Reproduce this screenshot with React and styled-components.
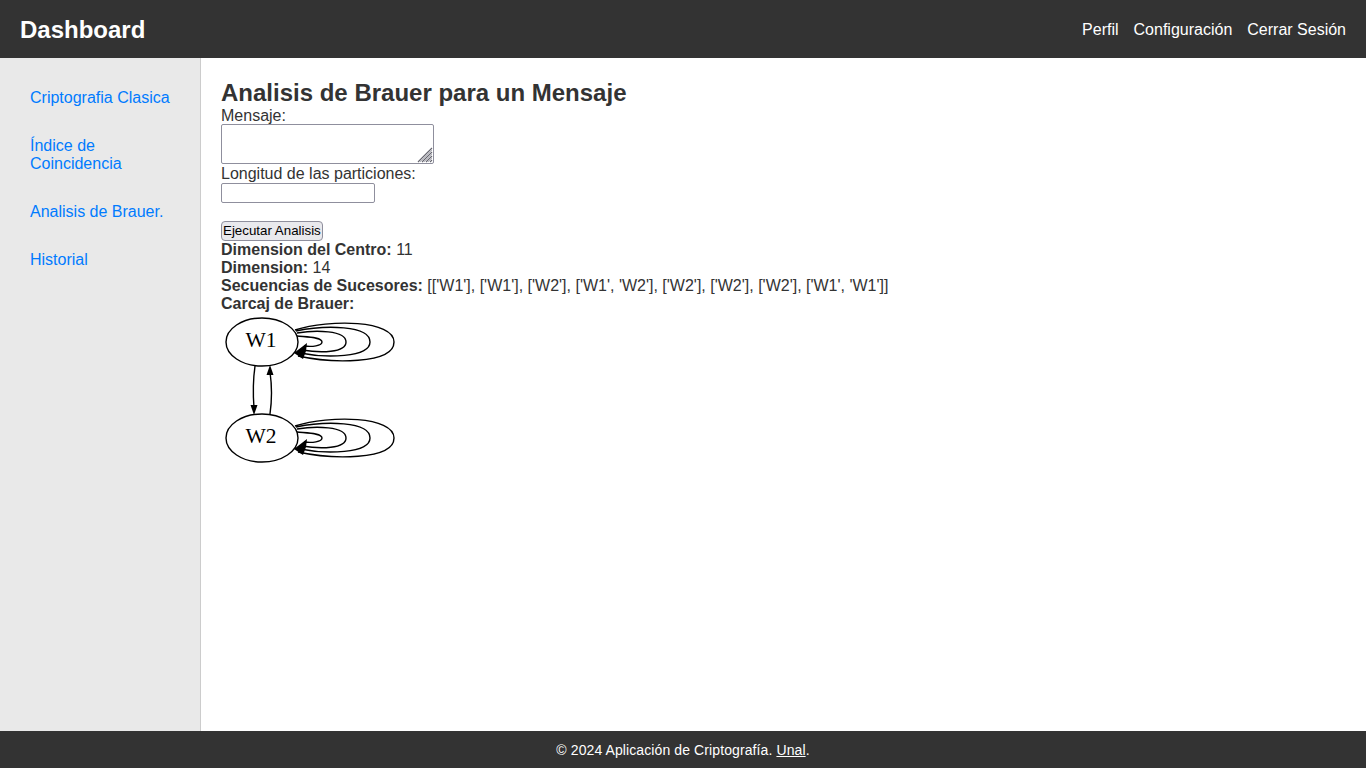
import React from "react";
import styled, { createGlobalStyle } from "styled-components";

const GlobalStyle = createGlobalStyle`
  html, body {
    margin: 0;
    padding: 0;
    height: 100%;
    font-family: "Liberation Sans", Arial, sans-serif;
    font-size: 16px;
    color: #333;
    background: #fff;
  }
`;

const Page = styled.div`
  display: flex;
  flex-direction: column;
  height: 100vh;
`;

const Header = styled.header`
  display: flex;
  align-items: center;
  justify-content: space-between;
  box-sizing: border-box;
  height: 58px;
  padding: 2px 20px 0;
  background: #333;
  color: #fff;
`;

const Brand = styled.h1`
  margin: 0;
  font-size: 24px;
  font-weight: bold;
`;

const TopNav = styled.nav`
  display: flex;
  gap: 15px;
`;

const TopLink = styled.a`
  color: #fff;
  text-decoration: none;
`;

const Body = styled.div`
  display: flex;
  flex: 1;
`;

const Sidebar = styled.aside`
  width: 160px;
  padding: 21px 20px 20px;
  background: #e9e9e9;
  border-right: 1px solid #ccc;
`;

const SideList = styled.ul`
  list-style: none;
  margin: 0;
  padding: 0;
  display: flex;
  flex-direction: column;
  gap: 10px;
`;

const SideLink = styled.a`
  display: block;
  padding: 10px;
  color: #007bff;
  text-decoration: none;
`;

const Main = styled.main`
  flex: 1;
  padding: 21px 20px 20px;
`;

const Title = styled.h2`
  margin: 0;
  font-size: 24px;
  font-weight: bold;
`;

const FieldLabel = styled.label`
  display: block;
  height: ${(p) => (p.$tall ? "19px" : "17px")};
  line-height: ${(p) => (p.$tall ? "20px" : "18px")};
`;

const MessageWrap = styled.div`
  position: relative;
  width: 213px;
  height: 40px;
`;

const MessageBox = styled.textarea`
  display: block;
  box-sizing: border-box;
  width: 213px;
  height: 40px;
  margin: 0;
  border: 1px solid #8f8f9d;
  border-radius: 2px;
  background: #fff;
  resize: none;
`;

const ResizeGrip = styled.svg`
  position: absolute;
  right: 1px;
  bottom: 1px;
  pointer-events: none;
`;

const LengthInput = styled.input`
  display: block;
  box-sizing: border-box;
  width: 154px;
  height: 20px;
  margin: 0 0 18px;
  border: 1px solid #8f8f9d;
  border-radius: 2px;
  background: #fff;
`;

const RunButton = styled.button`
  display: block;
  box-sizing: border-box;
  height: 20px;
  padding: 0 1px 2px;
  border: 1px solid #8f8f9d;
  border-radius: 4px;
  background: #e9e9ed;
  color: #000;
  font-family: "Liberation Sans", Arial, sans-serif;
  font-size: 13.33px;
`;

const ResultLine = styled.div`
  line-height: 18px;
`;

const Graph = styled.svg`
  display: block;
`;

const Footer = styled.footer`
  height: 37px;
  display: flex;
  align-items: center;
  justify-content: center;
  background: #333;
  color: #fff;
  font-size: 14px;
  letter-spacing: 0.1px;
`;

const FooterLink = styled.a`
  color: #fff;
  text-decoration: underline;
`;

const loops = (cy) => [
  `M297 ${cy - 6} C306 ${cy - 5} 322 ${cy - 5} 322 ${cy} C322 ${cy + 4} 312 ${cy + 5} 304 ${cy + 4}`,
  `M297 ${cy - 9} C315 ${cy - 12} 346 ${cy - 12} 346 ${cy} C346 ${cy + 11} 320 ${cy + 11} 302 ${cy + 8}`,
  `M296 ${cy - 11} C325 ${cy - 17} 370 ${cy - 17} 370 ${cy} C370 ${cy + 16} 325 ${cy + 16} 300 ${cy + 11}`,
  `M295 ${cy - 12} C330 ${cy - 23} 394 ${cy - 22} 394 ${cy} C394 ${cy + 23} 330 ${cy + 21} 298 ${cy + 14}`,
];

function Node({ cy, label }) {
  return (
    <g>
      <ellipse cx="262" cy={cy} rx="36" ry="24" fill="#fff" stroke="#000" strokeWidth="1.4" />
      {loops(cy).map((d) => (
        <path key={d} d={d} fill="none" stroke="#000" strokeWidth="1.4" />
      ))}
      <polygon points={`307,${cy + 1} 294,${cy + 11} 303,${cy + 17} 306,${cy + 9}`} fill="#000" />
      <text x="261" y={cy + 5} textAnchor="middle" fontFamily="'Liberation Serif', serif" fontSize="21.5" fill="#000">
        {label}
      </text>
    </g>
  );
}

function BrauerQuiver() {
  return (
    <Graph width="180" height="155" viewBox="221 313 180 155">
      <Node cy={342} label="W1" />
      <Node cy={438} label="W2" />
      <path d="M255 366 C253 380 253 395 254 408" fill="none" stroke="#000" strokeWidth="1.4" />
      <polygon points="250.5,405 257.5,405 254,415" fill="#000" />
      <path d="M270 414 C272 400 272 386 270 372" fill="none" stroke="#000" strokeWidth="1.4" />
      <polygon points="266.5,375 273.5,375 270,365" fill="#000" />
    </Graph>
  );
}

const sections = ["Criptografia Clasica", "Índice de Coincidencia", "Analisis de Brauer.", "Historial"];

export default function App() {
  return (
    <Page>
      <GlobalStyle />
      <Header>
        <Brand>Dashboard</Brand>
        <TopNav>
          <TopLink href="#">Perfil</TopLink>
          <TopLink href="#">Configuración</TopLink>
          <TopLink href="#">Cerrar Sesión</TopLink>
        </TopNav>
      </Header>
      <Body>
        <Sidebar>
          <SideList>
            {sections.map((s) => (
              <li key={s}>
                <SideLink href="#">{s}</SideLink>
              </li>
            ))}
          </SideList>
        </Sidebar>
        <Main>
          <Title>Analisis de Brauer para un Mensaje</Title>
          <FieldLabel htmlFor="mensaje">Mensaje:</FieldLabel>
          <MessageWrap>
            <MessageBox id="mensaje" />
            <ResizeGrip width="16" height="16" viewBox="0 0 16 16">
              <path d="M1 15 L15 1 M5 15 L15 5 M9 15 L15 9 M13 15 L15 13" stroke="#666670" strokeWidth="1.2" fill="none" />
              <path d="M3 15 L15 3 M7 15 L15 7 M11 15 L15 11" stroke="#b4b4bc" strokeWidth="1" fill="none" />
            </ResizeGrip>
          </MessageWrap>
          <FieldLabel htmlFor="longitud" $tall>Longitud de las particiones:</FieldLabel>
          <LengthInput id="longitud" type="text" />
          <RunButton>Ejecutar Analisis</RunButton>
          <ResultLine><strong>Dimension del Centro:</strong> 11</ResultLine>
          <ResultLine><strong>Dimension:</strong> 14</ResultLine>
          <ResultLine>
            <strong>Secuencias de Sucesores:</strong> [['W1'], ['W1'], ['W2'], ['W1', 'W2'], ['W2'], ['W2'], ['W2'], ['W1', 'W1']]
          </ResultLine>
          <ResultLine><strong>Carcaj de Brauer:</strong></ResultLine>
          <BrauerQuiver />
        </Main>
      </Body>
      <Footer>
        <span>© 2024 Aplicación de Criptografía. <FooterLink href="#">Unal</FooterLink>.</span>
      </Footer>
    </Page>
  );
}
